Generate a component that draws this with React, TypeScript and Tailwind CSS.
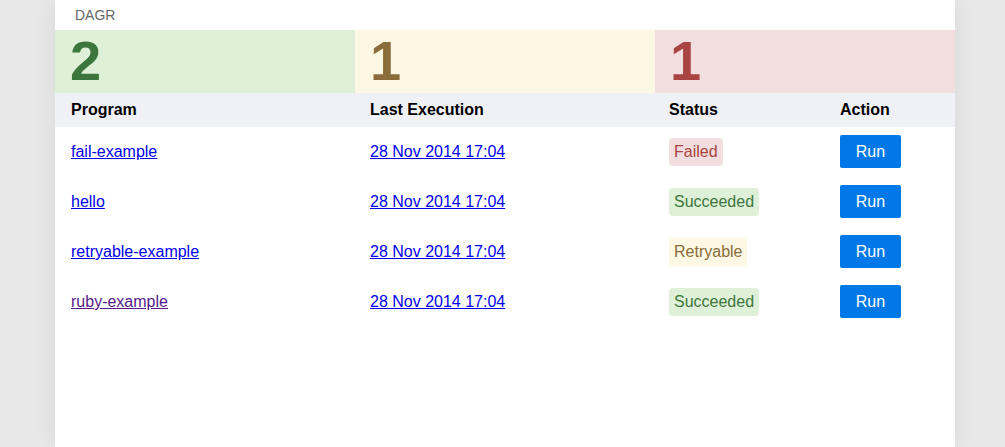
import React from "react";

type Status = "Failed" | "Succeeded" | "Retryable";

const rows: { name: string; visited?: boolean; status: Status }[] = [
  { name: "fail-example", status: "Failed" },
  { name: "hello", status: "Succeeded" },
  { name: "retryable-example", status: "Retryable" },
  { name: "ruby-example", visited: true, status: "Succeeded" },
];

const badgeClass: Record<Status, string> = {
  Failed: "bg-[#f2dede] text-[#a94442]",
  Succeeded: "bg-[#dff0d8] text-[#3c763d]",
  Retryable: "bg-[#fcf8e3] text-[#8a6d3b]",
};

export default function App() {
  return (
    <div
      className="min-h-screen w-full bg-[#e8e8e8] flex pl-[55px]"
      style={{ fontFamily: '"Liberation Sans", Arial, Helvetica, sans-serif' }}
    >
      <div className="w-[900px] min-h-screen bg-white shadow-[0_0_22px_rgba(0,0,0,0.07)]">
        <div className="h-[30px] pt-[5px] pl-5 text-[14px] leading-[20px] text-[#666]">DAGR</div>
        <div className="grid grid-cols-3 h-[63px]">
          <div className="bg-[#dff0d8] text-[#3c763d] pl-[15px] pt-[3px] text-[56px] leading-[56px] font-bold">2</div>
          <div className="bg-[#fcf7e3] text-[#8a6d3b] pl-[15px] pt-[3px] text-[56px] leading-[56px] font-bold">1</div>
          <div className="bg-[#f2dede] text-[#a94442] pl-[15px] pt-[3px] text-[56px] leading-[56px] font-bold">1</div>
        </div>
        <div className="grid grid-cols-[299px_299px_171px_131px] h-[34px] items-center bg-[#f0f1f6] text-black font-bold text-[16px]">
          <div className="pl-4">Program</div>
          <div className="pl-4">Last Execution</div>
          <div className="pl-4">Status</div>
          <div className="pl-4">Action</div>
        </div>
        {rows.map((r) => (
          <div
            key={r.name}
            className="grid grid-cols-[299px_299px_171px_131px] h-[50px] items-center text-[16px]"
          >
            <div className="pl-4">
              <a href="#" className={`underline ${r.visited ? "text-[#551a8b]" : "text-[#0000ee]"}`}>
                {r.name}
              </a>
            </div>
            <div className="pl-4">
              <a href="#" className="underline text-[#0000ee]">28 Nov 2014 17:04</a>
            </div>
            <div className="pl-4 flex">
              <span className={`px-[5px] py-[5px] leading-[18px] rounded-[4px] ${badgeClass[r.status]}`}>
                {r.status}
              </span>
            </div>
            <div className="pl-4 flex pb-[1px]">
              <button className="h-[33px] w-[61px] bg-[#0078e7] text-white rounded-[2px] text-[16px] leading-[18px]">
                Run
              </button>
            </div>
          </div>
        ))}
      </div>
    </div>
  );
}
